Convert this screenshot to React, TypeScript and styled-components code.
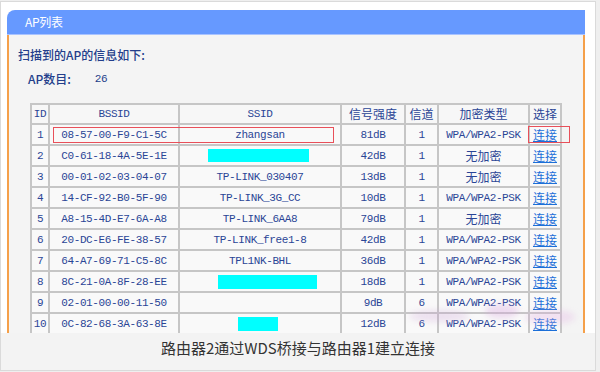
import React from "react";
import styled, { createGlobalStyle } from "styled-components";

const Global = createGlobalStyle`
  html, body { margin: 0; padding: 0; background: #efefef; }
  body { width: 600px; height: 372px; overflow: hidden; }
`;

const Frame = styled.div`
  box-sizing: border-box;
  margin-top: 1px;
  width: 596px;
  height: 370px;
  background: #ffffff;
  border: 1px solid #dadada;
  display: flex;
  flex-direction: column;
`;

const ScreenWrap = styled.div`
  padding: 8px 0 0 6px;
`;

const Screen = styled.div`
  position: relative;
  width: 578px;
  height: 323px;
  overflow: hidden;
  display: flex;
  flex-direction: column;
`;

const Header = styled.div`
  box-sizing: border-box;
  height: 25px;
  background: #6699ff;
  border-top-left-radius: 8px;
  border-bottom: 1px solid #a9c3ff;
  color: #ffffff;
  font-family: "Noto Sans CJK SC", "Liberation Sans", sans-serif;
  font-size: 12px;
  line-height: 24px;
  padding-left: 18px;
  letter-spacing: -0.3px;
`;

const Content = styled.div`
  flex: 1;
  background: #f4f4f4;
  border-left: 2px solid #f5a04a;
  border-right: 2px solid #f5a04a;
  padding: 12px 0 0 9px;
  color: #233e8b;
  font-family: "Noto Sans CJK SC", sans-serif;
  font-size: 12px;
`;

const Line = styled.div<{ $indent?: number; $top?: number }>`
  line-height: 16px;
  height: 16px;
  padding-left: ${(p) => p.$indent ?? 0}px;
  margin-top: ${(p) => p.$top ?? 0}px;
  font-weight: 500;
  display: flex;
  align-items: center;
`;

const Mono = styled.span`
  font-family: "Liberation Mono", monospace;
  font-size: 11px;
  letter-spacing: -0.4px;
`;

const Count = styled(Mono)`
  margin-left: 24px;
`;

const Table = styled.table`
  margin: 16px 0 0 12px;
  border-collapse: separate;
  border-spacing: 0;
  table-layout: fixed;
  width: 532px;
  border: 1px solid #c6c6c6;
`;

const Th = styled.th<{ $w: number }>`
  width: ${(p) => p.$w}px;
  border: 1px solid #c6c6c6;
  background: #f7f7f7;
  padding: 0;
  font-weight: normal;
  color: #2a4596;
  text-align: center;
  font-family: "Noto Sans CJK SC", sans-serif;
  font-size: 12px;
  height: 18px;
  line-height: 16px;
  white-space: nowrap;
`;

const MonoTh = styled(Th)`
  font-family: "Liberation Mono", monospace;
  font-size: 11px;
  letter-spacing: -0.4px;
`;

const Tr = styled.tr`
  height: 21px;
`;

const Td = styled.td<{ $cjk?: boolean }>`
  border: 1px solid #c6c6c6;
  background: #f9f9f9;
  padding: 0;
  text-align: center;
  color: #2a4596;
  white-space: nowrap;
  overflow: hidden;
  font-family: ${(p) =>
    p.$cjk ? '"Noto Sans CJK SC", sans-serif' : '"Liberation Mono", monospace'};
  font-size: ${(p) => (p.$cjk ? 12 : 11)}px;
  letter-spacing: ${(p) => (p.$cjk ? 0 : -0.4)}px;
  line-height: 16px;
`;

const Link = styled.a`
  color: #1c6fd8;
  text-decoration: underline;
  font-family: "Noto Sans CJK SC", sans-serif;
  font-size: 12px;
  cursor: pointer;
`;

const Mask = styled.span<{ $w: number; $h: number; $dx: number }>`
  display: inline-block;
  vertical-align: middle;
  width: ${(p) => p.$w}px;
  height: ${(p) => p.$h}px;
  background: #00ffff;
  margin-left: ${(p) => p.$dx}px;
`;

const RedBox = styled.div<{ $x: number; $y: number; $w: number; $h: number }>`
  position: absolute;
  box-sizing: border-box;
  left: ${(p) => p.$x}px;
  top: ${(p) => p.$y}px;
  width: ${(p) => p.$w}px;
  height: ${(p) => p.$h}px;
  border: 1.5px solid #e8505a;
  pointer-events: none;
`;

const Blob = styled.div<{ $x: number; $y: number; $w: number; $h: number; $c: string }>`
  position: absolute;
  left: ${(p) => p.$x}px;
  top: ${(p) => p.$y}px;
  width: ${(p) => p.$w}px;
  height: ${(p) => p.$h}px;
  border-radius: 50%;
  background: ${(p) => p.$c};
  filter: blur(3px);
  pointer-events: none;
`;

const Caption = styled.div`
  flex: 1;
  background: #f3f3f3;
  text-align: center;
  padding-top: 5px;
  line-height: 20px;
  font-family: "Noto Sans CJK SC", "Liberation Sans", sans-serif;
  font-size: 15px;
  color: #333333;
`;

type Row = {
  id: number;
  bssid: string;
  ssid?: string;
  mask?: { w: number; h: number; dx: number };
  signal: string;
  channel: number;
  enc: string;
};

const rows: Row[] = [
  { id: 1, bssid: "08-57-00-F9-C1-5C", ssid: "zhangsan", signal: "81dB", channel: 1, enc: "WPA/WPA2-PSK" },
  { id: 2, bssid: "C0-61-18-4A-5E-1E", mask: { w: 101, h: 13, dx: -3 }, signal: "42dB", channel: 1, enc: "无加密" },
  { id: 3, bssid: "00-01-02-03-04-07", ssid: "TP-LINK_030407", signal: "13dB", channel: 1, enc: "无加密" },
  { id: 4, bssid: "14-CF-92-B0-5F-90", ssid: "TP-LINK_3G_CC", signal: "10dB", channel: 1, enc: "WPA/WPA2-PSK" },
  { id: 5, bssid: "A8-15-4D-E7-6A-A8", ssid: "TP-LINK_6AA8", signal: "79dB", channel: 1, enc: "无加密" },
  { id: 6, bssid: "20-DC-E6-FE-38-57", ssid: "TP-LINK_free1-8", signal: "42dB", channel: 1, enc: "WPA/WPA2-PSK" },
  { id: 7, bssid: "64-A7-69-71-C5-8C", ssid: "TPL1NK-BHL", signal: "36dB", channel: 1, enc: "WPA/WPA2-PSK" },
  { id: 8, bssid: "8C-21-0A-8F-28-EE", mask: { w: 99, h: 14, dx: 14 }, signal: "18dB", channel: 1, enc: "WPA/WPA2-PSK" },
  { id: 9, bssid: "02-01-00-00-11-50", signal: "9dB", channel: 6, enc: "WPA/WPA2-PSK" },
  { id: 10, bssid: "0C-82-68-3A-63-8E", mask: { w: 40, h: 14, dx: -4 }, signal: "12dB", channel: 6, enc: "WPA/WPA2-PSK" },
];

export default function App() {
  return (
    <>
      <Global />
      <Frame>
        <ScreenWrap>
          <Screen>
            <Header>AP列表</Header>
            <Content>
              <Line>扫描到的AP的信息如下:</Line>
              <Line $indent={10} $top={8}>
                AP数目:<Count>26</Count>
              </Line>
              <Table>
                <thead>
                  <tr>
                    <MonoTh $w={16}>ID</MonoTh>
                    <MonoTh $w={128}>BSSID</MonoTh>
                    <MonoTh $w={160}>SSID</MonoTh>
                    <Th $w={62}>信号强度</Th>
                    <Th $w={31}>信道</Th>
                    <Th $w={89}>加密类型</Th>
                    <Th $w={30}>选择</Th>
                  </tr>
                </thead>
                <tbody>
                  {rows.map((r) => (
                    <Tr key={r.id}>
                      <Td>{r.id}</Td>
                      <Td>{r.bssid}</Td>
                      <Td>
                        {r.ssid ?? ""}
                        {r.mask && <Mask $w={r.mask.w} $h={r.mask.h} $dx={r.mask.dx} />}
                      </Td>
                      <Td>{r.signal}</Td>
                      <Td>{r.channel}</Td>
                      <Td $cjk={r.enc === "无加密"}>{r.enc}</Td>
                      <Td $cjk>
                        <Link>连接</Link>
                      </Td>
                    </Tr>
                  ))}
                </tbody>
              </Table>
            </Content>
            <RedBox $x={46} $y={117} $w={281} $h={16} />
            <RedBox $x={521} $y={116} $w={42} $h={17} />
            <Blob $x={402} $y={300} $w={60} $h={12} $c="rgba(200,150,210,0.25)" />
            <Blob $x={478} $y={294} $w={34} $h={14} $c="rgba(215,160,220,0.35)" />
            <Blob $x={518} $y={300} $w={50} $h={14} $c="rgba(225,170,225,0.3)" />
          </Screen>
        </ScreenWrap>
        <Caption>路由器2通过WDS桥接与路由器1建立连接</Caption>
      </Frame>
    </>
  );
}
